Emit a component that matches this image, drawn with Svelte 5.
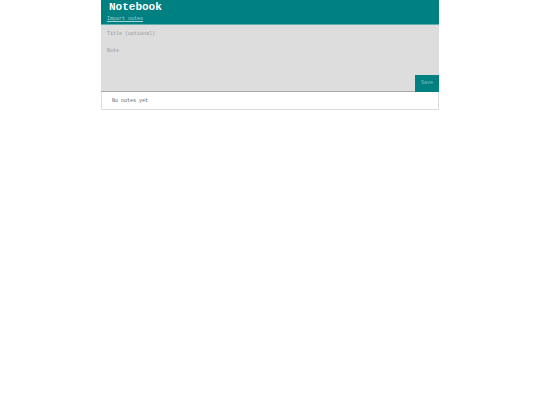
<script>
  let title = $state('');
  let note = $state('');
  let notes = $state([]);

  function save(event) {
    event.preventDefault();
    if (!note.trim()) return;
    notes.push({ title, note });
    title = '';
    note = '';
  }
</script>

<main class="notebook">
  <header>
    <h1>Notebook</h1>
    <a href="#import">Import notes</a>
  </header>

  <form onsubmit={save}>
    <input type="text" placeholder="Title (optional)" aria-label="Title (optional)" bind:value={title} />
    <textarea placeholder="Note" aria-label="Note" bind:value={note}></textarea>
    <button type="submit">Save</button>
  </form>

  <section class="notes">
    {#each notes as item}
      <article>
        {#if item.title}<h2>{item.title}</h2>{/if}
        <p>{item.note}</p>
      </article>
    {:else}
      <p>No notes yet</p>
    {/each}
  </section>
</main>

<style>
  :global(body) {
    background: #fff;
  }

  .notebook,
  .notebook * {
    box-sizing: border-box;
    font-family: "Liberation Mono", "Courier New", monospace;
  }

  .notebook {
    max-width: 338px;
    margin: 0 auto;
    font-size: 5px;
    line-height: 7px;
  }

  header {
    display: flex;
    flex-direction: column;
    align-items: flex-start;
    padding: 0 6px 1px;
    background: #008080;
    border-bottom: 1px solid #60b0b0;
  }

  h1 {
    margin: 0 0 2px;
    padding: 0 2px;
    font-size: 11px;
    line-height: 14px;
    font-weight: bold;
    color: #fff;
  }

  a {
    color: #a8d4d4;
  }

  form {
    display: flex;
    flex-direction: column;
    background: #ddd;
    border-bottom: 1px solid #aaa;
  }

  input,
  textarea {
    width: 100%;
    margin: 0;
    border: 0;
    padding: 5px 6px;
    background: transparent;
    color: #333;
    font-size: 5px;
    line-height: 7px;
    outline: none;
    resize: none;
  }

  input {
    height: 18px;
  }

  textarea {
    height: 32px;
  }

  ::placeholder {
    color: #999;
    opacity: 1;
  }

  button {
    align-self: flex-end;
    width: 24px;
    height: 17px;
    margin-bottom: -1px;
    border: 0;
    padding: 0;
    background: #008080;
    color: #80c0c0;
    font-size: 5px;
    line-height: 7px;
  }

  .notes {
    padding: 6px 10px 4px;
    border: 1px solid #ddd;
    border-top: 0;
    color: #666;
  }

  .notes p,
  .notes h2 {
    margin: 0;
    font-size: 5px;
    line-height: 7px;
  }
</style>
